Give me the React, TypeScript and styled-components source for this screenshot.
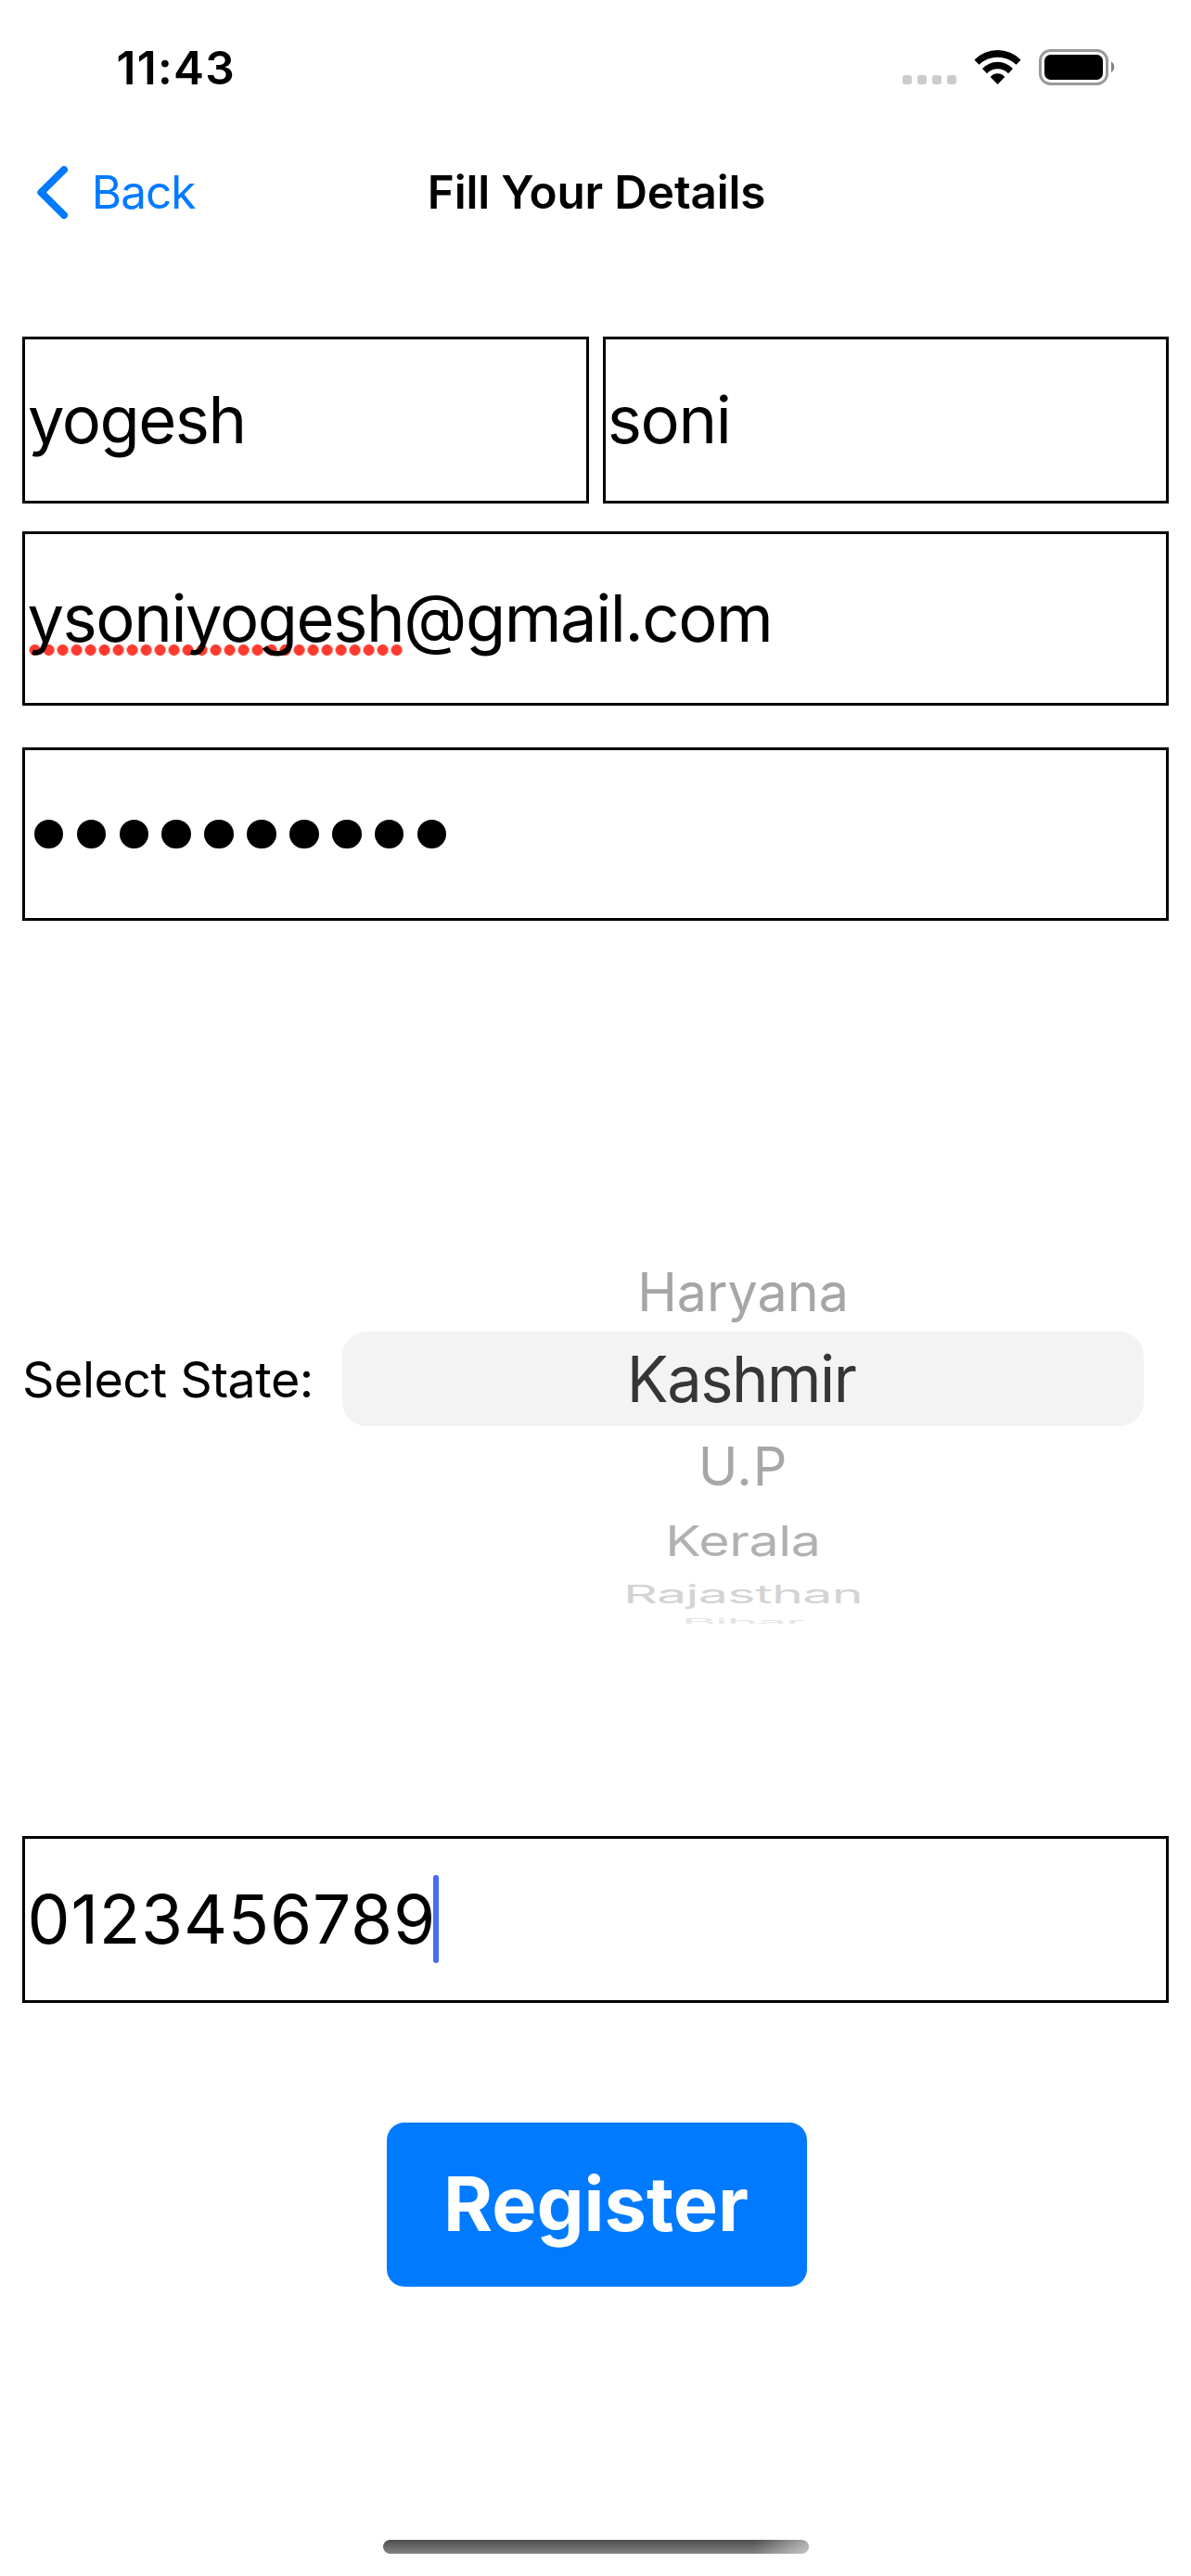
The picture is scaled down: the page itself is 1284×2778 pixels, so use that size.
import React from "react";
import styled, { createGlobalStyle } from "styled-components";

const BLUE = "#007aff";

const GlobalStyle = createGlobalStyle`
  *, *::before, *::after { box-sizing: border-box; }
  body {
    margin: 0;
    background: #fff;
    color: #000;
    font-family: Inter, "Liberation Sans", sans-serif;
  }
`;

const Screen = styled.div`
  display: flex;
  flex-direction: column;
  width: 1284px;
  height: 2778px;
  overflow: hidden;
  background: #fff;
`;

/* Status bar */

const StatusBar = styled.header`
  display: flex;
  align-items: center;
  justify-content: space-between;
  height: 146px;
  padding: 0 82px 0 125.5px;
`;

const Time = styled.span`
  font-size: 49.5px;
  font-weight: 600;
  line-height: 60px;
  letter-spacing: 1.3px;
`;

const Indicators = styled.div`
  display: flex;
  align-items: center;
  padding-bottom: 1px;
`;

const SignalDots = styled.div`
  display: flex;
  align-items: flex-end;
  gap: 6px;
  height: 37px;
  margin-right: 19px;
`;

const SignalDot = styled.i`
  width: 10px;
  height: 10px;
  border-radius: 3px;
  background: #cbcbcb;
`;

const WifiIcon = styled.svg`
  display: block;
  width: 51px;
  height: 37px;
  margin-right: 19px;
`;

const BatteryIcon = styled.svg`
  display: block;
  width: 82px;
  height: 39px;
`;

/* Navigation bar */

const NavBar = styled.nav`
  display: grid;
  grid-template-columns: 1fr auto 1fr;
  align-items: center;
  height: 122px;
`;

const BackButton = styled.div`
  display: flex;
  align-items: center;
  gap: 25.8px;
  padding-left: 40px;
  color: ${BLUE};
  font-size: 49.5px;
  line-height: 60px;
  letter-spacing: -1px;
`;

const Chevron = styled.svg`
  display: block;
  width: 33px;
  height: 57px;
`;

const Title = styled.h1`
  margin: 0;
  padding-left: 2px;
  font-size: 49.5px;
  font-weight: 600;
  line-height: 60px;
  letter-spacing: -0.2px;
  white-space: nowrap;
`;

/* Form */

const Form = styled.main`
  display: flex;
  flex-direction: column;
  padding: 95px 24px 0;
`;

const NameRow = styled.div`
  display: grid;
  grid-template-columns: 611px 610px;
  gap: 15px;
  margin-bottom: 30px;
`;

const Field = styled.div<{
  $height: number;
  $inset?: number;
  $size?: number;
  $tracking?: number;
  $after?: number;
}>`
  display: flex;
  align-items: center;
  height: ${(p) => p.$height}px;
  margin-bottom: ${(p) => p.$after ?? 0}px;
  padding-left: ${(p) => p.$inset ?? 3.5}px;
  border: 3px solid #000;
  font-size: ${(p) => p.$size ?? 70.5}px;
  line-height: 86px;
  letter-spacing: ${(p) => p.$tracking ?? -1.6}px;
  white-space: nowrap;
`;

const Misspelled = styled.span`
  display: inline-block;
  background: radial-gradient(circle at 6px 6px, #ff3b30 5.6px, rgba(255, 59, 48, 0) 6.3px)
    2.6px 71px / 15px 12px repeat-x;
`;

const Mask = styled.div`
  display: flex;
  gap: 14.4px;
  padding-left: 6.8px;
`;

const MaskDot = styled.i`
  width: 31.5px;
  height: 31.5px;
  border-radius: 50%;
  background: #000;
`;

const Caret = styled.i`
  width: 6px;
  height: 95px;
  margin: 0 0 1px -3px;
  border-radius: 3px;
  background: #466cf5;
`;

/* State picker */

const StateSection = styled.section`
  display: flex;
  align-items: flex-start;
  margin: 356px 0 229px;
`;

const Label = styled.label`
  width: 345px;
  margin-top: 88px;
  font-size: 53.8px;
  line-height: 102px;
  letter-spacing: -0.5px;
  white-space: nowrap;
`;

const Wheel = styled.div`
  display: flex;
  flex-direction: column;
  width: 864px;
  height: 402px;
  overflow: hidden;
`;

const WheelRow = styled.div<{ $height: number; $selected?: boolean }>`
  display: flex;
  flex: none;
  align-items: center;
  justify-content: center;
  height: ${(p) => p.$height}px;
  padding-right: ${(p) => (p.$selected ? 3 : 0)}px;
  border-radius: 26px;
  background: ${(p) => (p.$selected ? "#f3f3f3" : "transparent")};
`;

const WheelText = styled.span<{
  $color: string;
  $size?: number;
  $tracking: number;
  $scaleX?: number;
  $scaleY?: number;
}>`
  flex: none;
  color: ${(p) => p.$color};
  font-size: ${(p) => p.$size ?? 57.4}px;
  line-height: 84px;
  letter-spacing: ${(p) => p.$tracking}px;
  white-space: nowrap;
  transform: scale(${(p) => p.$scaleX ?? 1}, ${(p) => p.$scaleY ?? 1});
`;

const RegisterButton = styled.button`
  width: 453px;
  height: 177px;
  margin: 129px 0 0 393px;
  padding: 0 2px 1px 0;
  border: 0;
  border-radius: 19px;
  background: ${BLUE};
  color: #fff;
  font-family: inherit;
  font-size: 81px;
  font-weight: 700;
  line-height: 98px;
`;

const HomeIndicator = styled.div`
  width: 459px;
  height: 15px;
  margin: 273px 0 0 413px;
  border-radius: 8px;
  background:
    linear-gradient(100deg, rgba(255, 255, 255, 0) 87%, rgba(255, 255, 255, 0.5) 99%),
    linear-gradient(#4e4e4e, #828282);
`;

export default function App() {
  return (
    <Screen>
      <GlobalStyle />
      <StatusBar>
        <Time>11:43</Time>
        <Indicators>
          <SignalDots>
            <SignalDot />
            <SignalDot />
            <SignalDot />
            <SignalDot />
          </SignalDots>
          <WifiIcon viewBox="0 0 51 37">
            <path d="M.5 10.6A35 35 0 0 1 50.5 10.6L45.6 15.7A29.5 29.5 0 0 0 5.4 15.7Z" />
            <path d="M9 20.1A22.3 22.3 0 0 1 42 20.1L37 25.2A15.8 15.8 0 0 0 14 25.2Z" />
            <path d="M17.7 29.1A9.8 9.8 0 0 1 33.3 29.1L25.5 37Z" />
          </WifiIcon>
          <BatteryIcon viewBox="0 0 82 39">
            <rect x="1.5" y="1.5" width="72" height="36" rx="11" fill="none" stroke="#999" strokeWidth="3" />
            <rect x="6" y="6" width="63" height="27" rx="6.5" />
            <path d="M78 13.2A7.2 7.2 0 0 1 78 25.2Z" fill="#808080" />
          </BatteryIcon>
        </Indicators>
      </StatusBar>

      <NavBar>
        <BackButton>
          <Chevron viewBox="0 0 33 57" fill="none" stroke="currentColor" strokeWidth="8" strokeLinecap="round" strokeLinejoin="round">
            <path d="M29 4L4.3 28.5L29 53" />
          </Chevron>
          Back
        </BackButton>
        <Title>Fill Your Details</Title>
      </NavBar>

      <Form>
        <NameRow>
          <Field $height={180} $inset={3} $tracking={-1.5}>yogesh</Field>
          <Field $height={180} $inset={1.8} $tracking={-1.4}>soni</Field>
        </NameRow>
        <Field $height={188} $inset={2.4} $tracking={-1.43} $after={45}>
          <Misspelled>ysoniyogesh</Misspelled>@gmail.com
        </Field>
        <Field $height={187} $inset={3}>
          <Mask>
            {Array.from({ length: 10 }, (_, i) => (
              <MaskDot key={i} />
            ))}
          </Mask>
        </Field>

        <StateSection>
          <Label>Select State:</Label>
          <Wheel>
            <WheelRow $height={87}>
              <WheelText $color="#a6a6a6" $tracking={0}>Haryana</WheelText>
            </WheelRow>
            <WheelRow $height={102} $selected>
              <WheelText $color="#363636" $size={68.8} $tracking={-1.5} $scaleX={0.97}>Kashmir</WheelText>
            </WheelRow>
            <WheelRow $height={86}>
              <WheelText $color="#a7a7a7" $tracking={0.9}>U.P</WheelText>
            </WheelRow>
            <WheelRow $height={75.4}>
              <WheelText $color="#b1b1b1" $tracking={-0.4} $scaleY={0.784}>Kerala</WheelText>
            </WheelRow>
            <WheelRow $height={39.8}>
              <WheelText $color="#d3d3d3" $tracking={-0.7} $scaleY={0.48}>Rajasthan</WheelText>
            </WheelRow>
            <WheelRow $height={19}>
              <WheelText $color="#e5e5e5" $tracking={-1.4} $scaleY={0.19}>Bihar</WheelText>
            </WheelRow>
          </Wheel>
        </StateSection>

        <Field $height={180} $inset={2.6} $size={73} $tracking={0.75}>
          0123456789
          <Caret />
        </Field>
        <RegisterButton>Register</RegisterButton>
      </Form>

      <HomeIndicator />
    </Screen>
  );
}
